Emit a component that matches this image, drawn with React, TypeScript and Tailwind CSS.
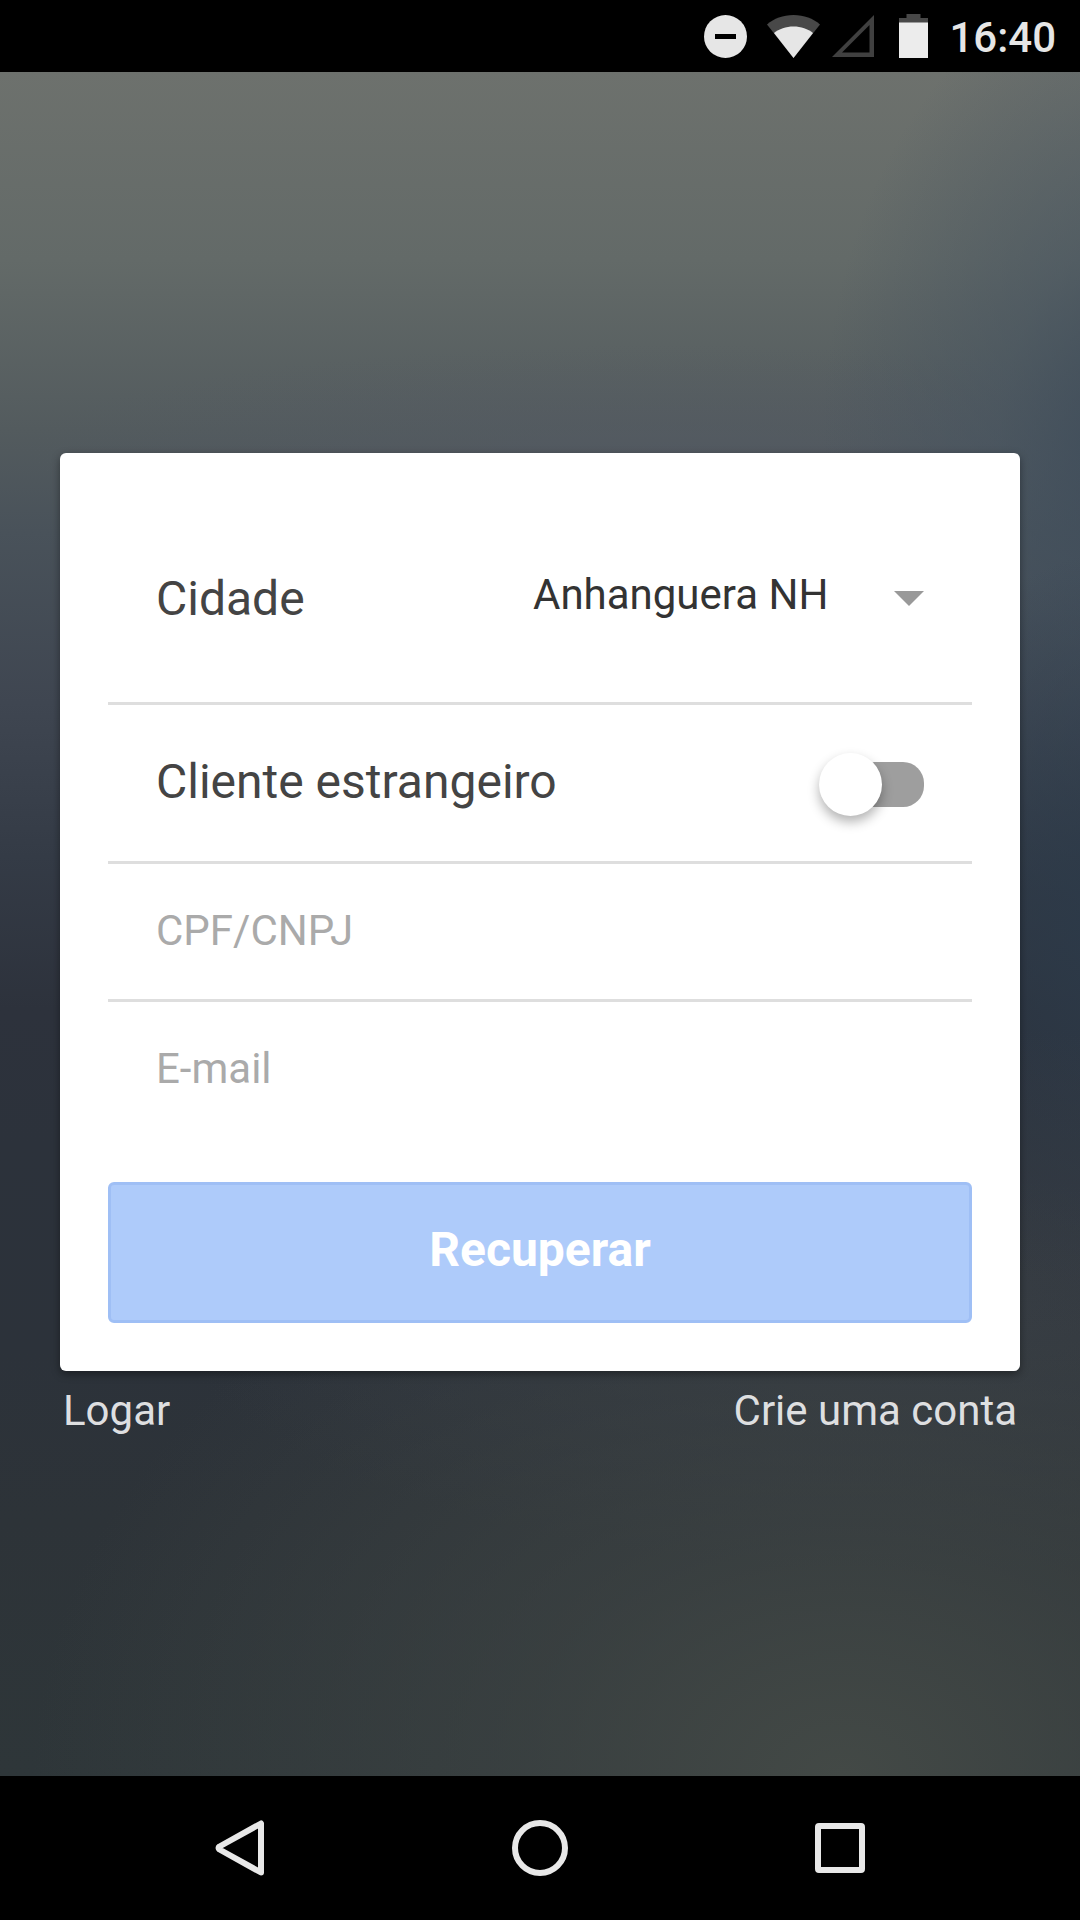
import React, { useState } from "react";

function StatusBar() {
  return (
    <header className="flex h-[72px] shrink-0 items-center justify-end bg-black pr-6 text-[#e6e6e6]">
      <svg className="mr-5 size-[43px]" viewBox="0 0 43 43" aria-label="Não perturbe">
        <circle cx="21.500" cy="21.500" r="21.500" fill="#e6e6e6" />
        <rect x="11" y="19" width="21" height="5" fill="#000" />
      </svg>
      <svg className="mr-3 h-[43px] w-[53px]" viewBox="0 0 53 43" aria-label="Wi-Fi">
        <path d="M26.500 43 L0 9.500 C7 3.500 16 0 26.500 0 S46 3.500 53 9.500 Z" fill="#484848" />
        <path d="M26.500 43 L7 18 C12 14 19 11.500 26.500 11.500 S41 14 46 18 Z" fill="#e6e6e6" />
      </svg>
      <svg className="mr-[25px] size-[42px]" viewBox="0 0 42 42" aria-label="Sem sinal">
        <path fillRule="evenodd" d="M0 42 L42 0 V42 Z M10 37.500 H37.500 V10 Z" fill="#404040" />
      </svg>
      <svg className="mr-[21px] h-11 w-[29px]" viewBox="0 0 29 44" aria-label="Bateria">
        <path d="M7.500 0 H21.500 V4 H29 V9 H0 V4 H7.500 Z" fill="#484848" />
        <rect y="8.500" width="29" height="35.500" fill="#ececec" />
      </svg>
      <time className="pt-1 text-[42px] leading-[48px] font-medium">16:40</time>
    </header>
  );
}

function NavBar() {
  const icon = "size-[60px] fill-none stroke-[#e8e8e8] stroke-6";
  return (
    <nav className="flex h-36 shrink-0 items-center justify-around bg-black px-[90px]">
      <button type="button" aria-label="Voltar">
        <svg className={icon} viewBox="0 0 60 60" strokeLinejoin="round">
          <path d="M51 5.500 V54.500 L9.500 31.500 Q7.500 30 9.500 28.500 Z" />
        </svg>
      </button>
      <button type="button" aria-label="Início">
        <svg className={icon} viewBox="0 0 60 60">
          <circle cx="30" cy="30" r="25" />
        </svg>
      </button>
      <button type="button" aria-label="Recentes">
        <svg className={icon} viewBox="0 0 60 60" strokeLinejoin="round">
          <rect x="8" y="8" width="44" height="44" rx="1" />
        </svg>
      </button>
    </nav>
  );
}

export default function App() {
  const [foreign, setForeign] = useState(false);
  const field =
    "w-full bg-transparent px-12 text-[42px] leading-[48px] text-[#444] outline-none placeholder:text-[#aaa] placeholder:opacity-100";
  return (
    <div className="flex min-h-screen flex-col font-[Roboto,sans-serif]">
      <StatusBar />
      <main className="flex flex-1 flex-col justify-center bg-[radial-gradient(ellipse_75%_36%_at_78%_100%,#434946_0%,#40464599_40%,#3c434400_100%),radial-gradient(ellipse_70%_16%_at_85%_72%,#3b4149a0_0%,#3b414900_100%),radial-gradient(ellipse_24%_22%_at_104%_50%,#2c3a49_0%,#2c3a4900_100%),radial-gradient(ellipse_30%_28%_at_106%_22%,#3e4c5a_0%,#44525f88_45%,#4c5a6500_100%),radial-gradient(ellipse_60%_6%_at_62%_22%,#545a6488_0%,#545a6400_100%),linear-gradient(to_bottom,#6d716d_0%,#636a68_11%,#535b5e_21%,#49525a_27%,#3f4651_37%,#343b46_46%,#2d323c_55%,#2c323b_63%,#2c323a_75%,#2d3338_85%,#2e3639_100%)] px-[60px] pt-[39px]">
        <form
          className="rounded-md bg-white p-12 shadow-[0_3px_9px_rgba(0,0,0,0.4)]"
          onSubmit={(e) => e.preventDefault()}
        >
          <div className="flex h-[204px] items-center justify-between border-b-3 border-[#dedede] px-12">
            <label htmlFor="city" className="pb-1 text-[48px] leading-[56px] text-[#444]">
              Cidade
            </label>
            <div className="relative flex items-center pb-1.5">
              <select
                id="city"
                className="appearance-none bg-transparent pr-[95px] pb-1.5 text-[42px] leading-[48px] text-[#333] outline-none"
              >
                <option>Anhanguera NH</option>
              </select>
              <svg
                className="pointer-events-none absolute right-0 h-[15px] w-[30px]"
                viewBox="0 0 30 15"
                aria-hidden="true"
              >
                <path d="M0 0 H30 L15 15 Z" fill="#999" />
              </svg>
            </div>
          </div>
          <div className="flex h-[159px] items-center justify-between border-b-3 border-[#dedede] px-12">
            <label htmlFor="foreign" className="pb-0.5 text-[48px] leading-[56px] text-[#444]">
              Cliente estrangeiro
            </label>
            <input
              id="foreign"
              type="checkbox"
              role="switch"
              checked={foreign}
              onChange={(e) => setForeign(e.target.checked)}
              className="relative mt-1 h-[45px] w-[98px] appearance-none rounded-[21px] bg-[#9e9e9e] before:absolute before:-top-[9px] before:-left-[7px] before:size-[63px] before:rounded-full before:bg-white before:shadow-[0_6px_12px_rgba(0,0,0,0.3)] checked:bg-[#aecbfa] checked:before:left-[43px]"
            />
          </div>
          <div className="flex h-[138px] items-center border-b-3 border-[#dedede]">
            <input type="text" aria-label="CPF/CNPJ" placeholder="CPF/CNPJ" className={field} />
          </div>
          <div className="flex h-[135px] items-center">
            <input type="email" aria-label="E-mail" placeholder="E-mail" className={field} />
          </div>
          <button
            type="submit"
            className="mt-[45px] h-[141px] w-full rounded-md border-3 border-[#9fbff5] bg-[#aecbfa] pb-1 text-[48px] leading-[56px] font-bold text-white"
          >
            Recuperar
          </button>
        </form>
        <div className="mt-4 flex justify-between px-[3px] text-[42px] leading-[48px] text-[#dedfe0]">
          <a href="#logar">Logar</a>
          <a href="#conta">Crie uma conta</a>
        </div>
      </main>
      <NavBar />
    </div>
  );
}
